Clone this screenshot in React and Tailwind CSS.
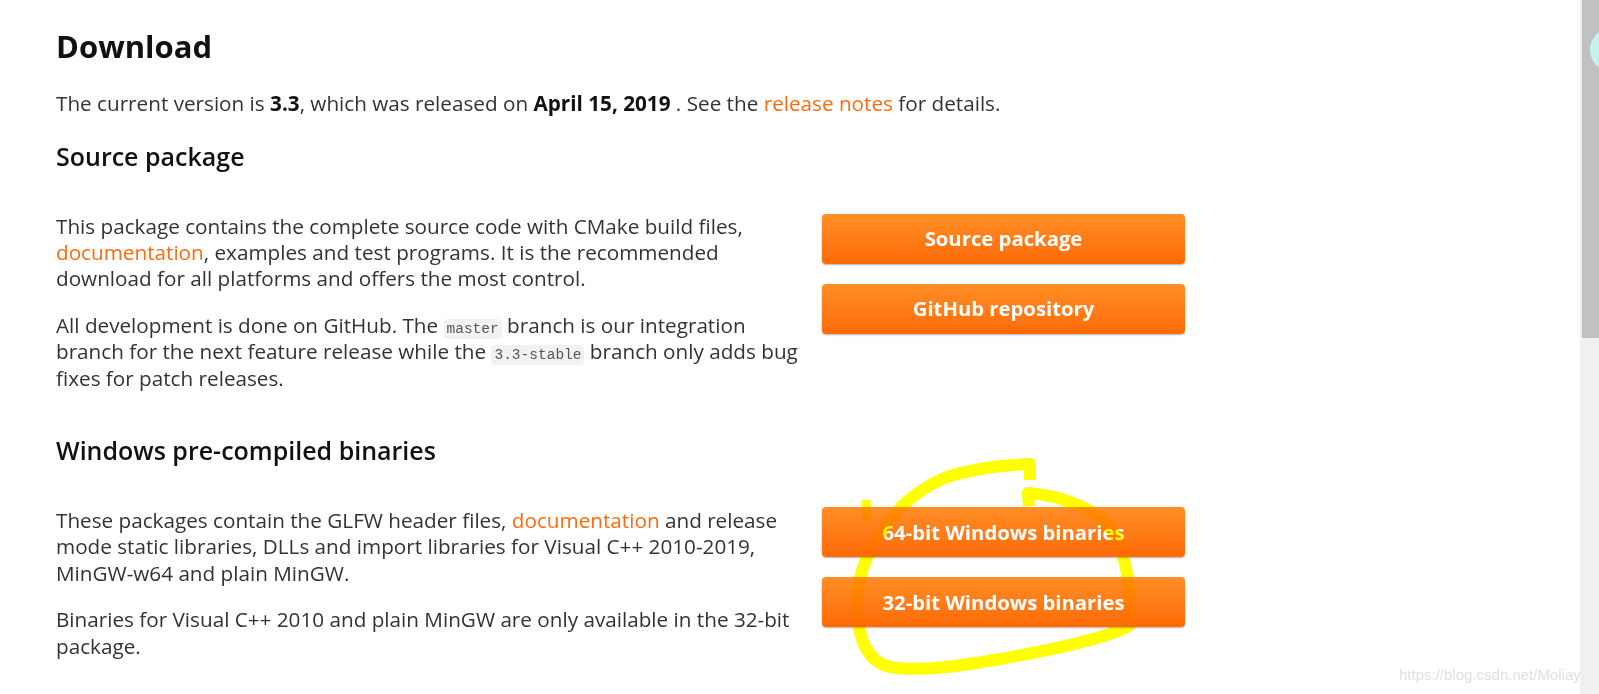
import React from 'react';

const Btn = ({ children }) => (
  <a
    href="#"
    className="flex h-[50px] items-center justify-center rounded-[4px] bg-gradient-to-b from-[#ff8e26] to-[#ff6a02] text-[20.3px] font-bold text-white shadow-[0_1px_2px_rgba(0,0,0,0.3)]"
  >
    {children}
  </a>
);

const Code = ({ children }) => (
  <code className="rounded-[4px] bg-[#f2f2f2] px-[3px] py-[2px] font-['Liberation_Mono',monospace] text-[14.5px] leading-none text-[#555]">
    {children}
  </code>
);

const Link = ({ children }) => (
  <a href="#" className="text-[#ff6a0d]">
    {children}
  </a>
);

export default function App() {
  return (
    <div className="relative flex h-screen overflow-hidden bg-white font-['Open_Sans',sans-serif] text-[20.7px] leading-[26.4px] text-[#333]">
      <main className="flex-1 pl-[56px] pt-[29px]">
        <h2 className="text-[31px] font-bold leading-[1.1] text-[#111]">Download</h2>
        <p className="mt-[27px]">
          The current version is <b className="text-[#111]">3.3</b>, which was released on{' '}
          <b className="text-[#111]">April 15, 2019</b> . See the <Link>release notes</Link> for details.
        </p>

        <h3 className="mt-[25px] text-[25px] font-semibold leading-[1.16] text-[#111]">Source package</h3>
        <section className="mt-[42px] flex gap-[8px]">
          <div className="w-[758px]">
            <p className="mb-[20px]">
              This package contains the complete source code with CMake build files,{' '}
              <Link>documentation</Link>, examples and test programs. It is the recommended download for all
              platforms and offers the most control.
            </p>
            <p className="mb-[20px]">
              All development is done on GitHub. The <Code>master</Code> branch is our integration branch for the
              next feature release while the <Code>3.3-stable</Code> branch only adds bug fixes for patch releases.
            </p>
          </div>
          <div className="flex w-[363px] flex-col gap-[20px] pt-[1px]">
            <Btn>Source package</Btn>
            <Btn>GitHub repository</Btn>
          </div>
        </section>

        <h3 className="mt-[25px] text-[25px] font-semibold leading-[1.16] text-[#111]">Windows pre-compiled binaries</h3>
        <section className="mt-[42px] flex gap-[8px]">
          <div className="w-[758px]">
            <p className="mb-[20px]">
              These packages contain the GLFW header files, <Link>documentation</Link> and release mode static
              libraries, DLLs and import libraries for Visual C++ 2010-2019, MinGW-w64 and plain MinGW.
            </p>
            <p className="mb-[20px]">
              Binaries for Visual C++ 2010 and plain MinGW are only available in the 32-bit package.
            </p>
          </div>
          <div className="flex w-[363px] flex-col gap-[20px]">
            <Btn>64-bit Windows binaries</Btn>
            <Btn>32-bit Windows binaries</Btn>
          </div>
        </section>
      </main>

      {/* scrollbar */}
      <div className="w-[19px] shrink-0 bg-[#f0f0f0] pl-[2px]">
        <div className="relative h-[338px] overflow-hidden bg-[#c1c1c1]">
          <div className="absolute left-[8px] top-[28px] h-[44px] w-[44px] rounded-full bg-[#c6f1ec]" />
        </div>
      </div>

      {/* highlighter annotation */}
      <svg
        className="pointer-events-none absolute inset-0 h-full w-full mix-blend-multiply"
        viewBox="0 0 1599 694"
        fill="none"
      >
        <path
          d="M1029 506 L1028 493 C1065 496 1100 510 1115 535 C1126 555 1131 590 1130 625 C1110 638 1040 652 1000 659 C960 666 920 672 890 667 C868 662 858 640 857 607 C856 580 866 555 880 533 C895 510 915 490 947 477 C975 468 1005 465 1030 464 L1030 480"
          stroke="#ffff00"
          strokeWidth="12"
          strokeLinejoin="round"
        />
        <path d="M866 500 L867 522" stroke="#ffff00" strokeWidth="9" />
      </svg>

      <div className="absolute left-[1399px] top-[666px] font-['Liberation_Sans',sans-serif] text-[15px] leading-[18px] text-[#e0e0e0]">
        https://blog.csdn.net/Moliay
      </div>
    </div>
  );
}
